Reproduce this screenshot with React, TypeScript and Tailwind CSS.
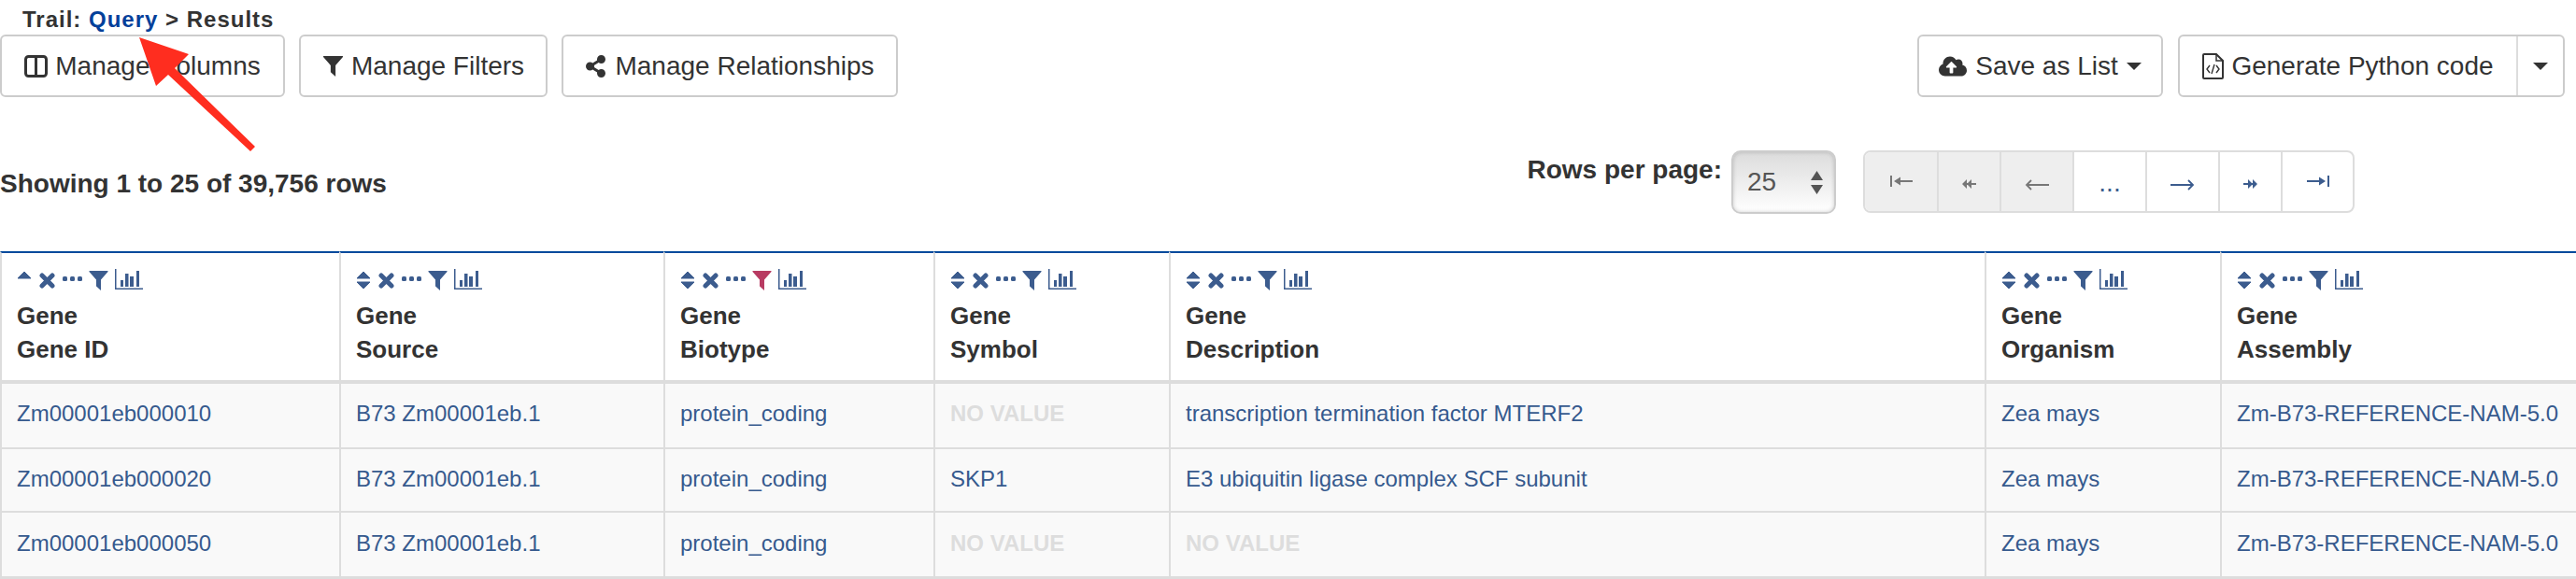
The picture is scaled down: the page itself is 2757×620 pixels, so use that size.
import React from 'react';
import { FaCloudUploadAlt, FaShareAlt } from 'react-icons/fa';

const columns = [
  { group: 'Gene', name: 'Gene ID', width: 'w-[363px]', sort: 'up' },
  { group: 'Gene', name: 'Source', width: 'w-[347px]' },
  { group: 'Gene', name: 'Biotype', width: 'w-[289px]', filtered: true },
  { group: 'Gene', name: 'Symbol', width: 'w-[252px]' },
  { group: 'Gene', name: 'Description', width: 'w-[873px]' },
  { group: 'Gene', name: 'Organism', width: 'w-[252px]' },
  { group: 'Gene', name: 'Assembly', width: 'w-[381px]' },
];

const rows = [
  {
    height: 'h-[70px]',
    cellClass: 'border-b-2 pb-[4px]',
    cells: ['Zm00001eb000010', 'B73 Zm00001eb.1', 'protein_coding', null, 'transcription termination factor MTERF2', 'Zea mays', 'Zm-B73-REFERENCE-NAM-5.0'],
  },
  {
    height: 'h-[68px]',
    cellClass: 'border-b-2 pb-[2px]',
    cells: ['Zm00001eb000020', 'B73 Zm00001eb.1', 'protein_coding', 'SKP1', 'E3 ubiquitin ligase complex SCF subunit', 'Zea mays', 'Zm-B73-REFERENCE-NAM-5.0'],
  },
  {
    height: 'h-[71px]',
    cellClass: 'border-b-[3px] pb-[2px]',
    cells: ['Zm00001eb000050', 'B73 Zm00001eb.1', 'protein_coding', null, null, 'Zea mays', 'Zm-B73-REFERENCE-NAM-5.0'],
  },
];

const FunnelIcon: React.FC<{ className?: string }> = ({ className }) => (
  <svg viewBox="0 0 21 21" className={className} fill="currentColor">
    <path d="M1 0H20Q21 0 20.5 1L13 9.5V21L8 16.5V9.5L.5 1Q0 0 1 0Z" />
  </svg>
);

const SortIcon: React.FC<{ direction?: string }> = ({ direction }) => (
  <svg viewBox="0 0 16 20" className="mt-[2px] h-[20px] w-[16px]" fill="currentColor" stroke="currentColor" strokeWidth="1" strokeLinejoin="round">
    <path d="M1 8L8 1L15 8Z" />
    {direction !== 'up' && <path d="M1 12L15 12L8 19Z" />}
  </svg>
);

const ColumnTools: React.FC<{ sort?: string; filtered?: boolean }> = ({ sort, filtered }) => (
  <div className="flex h-[23px] items-start text-[#3c5c8e]">
    <SortIcon direction={sort} />
    <svg viewBox="0 0 17 17" className="mt-[4px] ml-[8px] h-[17px] w-[17px]" stroke="currentColor" strokeWidth="5" strokeLinecap="round">
      <path d="M3 3L14 14M14 3L3 14" />
    </svg>
    <svg viewBox="0 0 21 5" className="mt-[8px] ml-[8px] h-[5px] w-[21px]" fill="currentColor">
      <rect x="0" width="5" height="5" rx="1.5" />
      <rect x="8" width="5" height="5" rx="1.5" />
      <rect x="16" width="5" height="5" rx="1.5" />
    </svg>
    <FunnelIcon className={filtered ? 'mt-[2px] ml-[7px] h-[21px] w-[21px] text-[#b83b62]' : 'mt-[2px] ml-[7px] h-[21px] w-[21px]'} />
    <svg viewBox="0 0 30 23" className="ml-[7px] h-[23px] w-[30px]" fill="currentColor">
      <rect x="0" y="0" width="1.5" height="22" />
      <rect x="0" y="20.5" width="30" height="1.5" />
      <rect x="6" y="12" width="3" height="7" />
      <rect x="11" y="5" width="3.5" height="14" />
      <rect x="16" y="8" width="4" height="11" />
      <rect x="23" y="2" width="3" height="17" />
    </svg>
  </div>
);

const Caret: React.FC<{ className?: string }> = ({ className }) => (
  <span className={`inline-block border-x-[8px] border-t-[8px] border-x-transparent border-t-[#333] ${className ?? ''}`} />
);

const buttonClass = 'flex h-[67px] items-center rounded-[6px] border-2 border-[#ccc] bg-white text-[28px] text-[#333]';

const PageCell: React.FC<{ width: string; disabled?: boolean; first?: boolean; children: React.ReactNode }> = ({ width, disabled, first, children }) => (
  <div className={`flex h-full items-center justify-center ${width} ${first ? '' : 'border-l-2 border-[#ddd]'} ${disabled ? 'bg-[#eee] text-[#777]' : 'text-[#3c5c8e]'}`}>
    {children}
  </div>
);

export default function App() {
  return (
    <div className="relative h-[620px] w-[2757px] overflow-hidden bg-white font-['Liberation_Sans',sans-serif] text-[#333]">
      <div className="flex h-[37px] items-center pt-[5px] pl-[24px] text-[24px] font-bold tracking-[1px]">
        <span>Trail:&nbsp;</span>
        <a className="text-[#03409a]">Query</a>
        <span>&nbsp;&gt; Results</span>
      </div>

      <div className="flex items-start justify-between pr-[12px]">
        <div className="flex gap-[15px]">
          <button className={`${buttonClass} w-[305px] justify-center gap-[8px]`}>
            <svg viewBox="0 0 25 24" className="h-[24px] w-[25px]" fill="none" stroke="currentColor" strokeWidth="3">
              <rect x="1.5" y="1.5" width="22" height="21" rx="3" />
              <path d="M12.5 1.5V22.5" />
            </svg>
            Manage Columns
          </button>
          <button className={`${buttonClass} w-[266px] justify-center gap-[8px]`}>
            <FunnelIcon className="h-[22px] w-[23px]" />
            Manage Filters
          </button>
          <button className={`${buttonClass} w-[360px] justify-center gap-[9px]`}>
            <FaShareAlt className="h-[24px] w-[23px]" />
            Manage Relationships
          </button>
        </div>
        <div className="flex gap-[16px]">
          <button className={`${buttonClass} w-[263px] justify-center gap-[9px]`}>
            <FaCloudUploadAlt className="h-[30px] w-[30px]" />
            Save as List
            <Caret />
          </button>
          <div className={`${buttonClass} w-[414px]`}>
            <button className="flex h-full w-[362px] items-center justify-center gap-[8px] border-r-2 border-[#ddd]">
              <svg viewBox="0 0 23 28" className="h-[28px] w-[23px]" fill="none" stroke="currentColor" strokeWidth="2">
                <path d="M1 2Q1 1 2 1H15L22 8V26Q22 27 21 27H2Q1 27 1 26Z" />
                <path d="M15 1V8H22" strokeWidth="1.5" />
                <path d="M8 13L5 17L8 21M15 13L18 17L15 21M13 12L10 22" strokeWidth="1.4" />
              </svg>
              Generate Python code
            </button>
            <button className="flex h-full flex-1 items-center justify-center">
              <Caret />
            </button>
          </div>
        </div>
      </div>

      <div className="mt-[57px] flex h-[68px] items-start pr-[237px]">
        <div className="mt-[20px] text-[28px] leading-[32px] font-bold">Showing 1 to 25 of 39,756 rows</div>
        <div className="ml-auto flex items-start">
          <label className="mt-[5px] text-[28px] leading-[32px] font-bold">Rows per page:</label>
          <div className="ml-[10px] flex h-[68px] w-[112px] items-center justify-between rounded-[10px] border-2 border-[#ccc] bg-gradient-to-b from-[#dcdcdc] to-white pr-[12px] pl-[15px] text-[28px] text-[#555] shadow-[inset_0_0_4px_rgba(0,0,0,0.18)]">
            25
            <svg viewBox="0 0 13 25" className="h-[25px] w-[13px]" fill="currentColor">
              <path d="M6.500 0L13 10H0ZM0 15H13L6.500 25Z" />
            </svg>
          </div>
          <div className="ml-[29px] flex h-[67px] overflow-hidden rounded-[8px] border-2 border-[#ddd]">
            <PageCell width="w-[77px]" disabled first>
              <svg viewBox="0 0 24 12" className="mb-[2px] h-[12px] w-[24px]" fill="currentColor">
                <rect x="0" width="2" height="12" />
                <path d="M4 6L11 1.500V5H24V7H11V10.500Z" />
              </svg>
            </PageCell>
            <PageCell width="w-[67px]" disabled>
              <svg viewBox="0 0 15 10" className="mt-[5px] h-[10px] w-[15px]" fill="currentColor">
                <path d="M0 5L5 0V4H15V6H5V10ZM5 5L10 0V10Z" />
              </svg>
            </PageCell>
            <PageCell width="w-[78px]" disabled>
              <svg viewBox="0 0 26 12" className="mt-[7px] h-[12px] w-[26px]" fill="none" stroke="currentColor" strokeWidth="1.800">
                <path d="M26 6H2M7 1L2 6L7 11" />
              </svg>
            </PageCell>
            <PageCell width="w-[78px]">
              <span className="mt-[2px] text-[28px] leading-[32px]">...</span>
            </PageCell>
            <PageCell width="w-[78px]">
              <svg viewBox="0 0 26 12" className="mt-[7px] h-[12px] w-[26px]" fill="none" stroke="currentColor" strokeWidth="1.800">
                <path d="M0 6H24M19 1L24 6L19 11" />
              </svg>
            </PageCell>
            <PageCell width="w-[67px]">
              <svg viewBox="0 0 15 10" className="mt-[5px] h-[10px] w-[15px]" fill="currentColor">
                <path d="M15 5L10 0V4H0V6H10V10ZM10 5L5 0V10Z" />
              </svg>
            </PageCell>
            <PageCell width="w-[77px]">
              <svg viewBox="0 0 24 12" className="mb-[2px] h-[12px] w-[24px]" fill="currentColor">
                <rect x="22" width="2" height="12" />
                <path d="M20 6L13 1.500V5H0V7H13V10.500Z" />
              </svg>
            </PageCell>
          </div>
        </div>
      </div>

      <table className="mt-[40px] w-[2757px] table-fixed border-separate border-spacing-0">
        <colgroup>
          {columns.map(col => (
            <col key={col.name} className={col.width} />
          ))}
        </colgroup>
        <thead>
          <tr>
            {columns.map(col => (
              <th key={col.name} className="h-[142px] border-t-2 border-b-4 border-l-2 border-t-[#024a9c] border-b-[#ddd] border-l-[#ddd] px-[16px] pt-[17px] pb-[15px] text-left align-top">
                <ColumnTools sort={col.sort} filtered={col.filtered} />
                <div className="mt-[9px] text-[26px] leading-[36px] font-bold">{col.group}</div>
                <div className="text-[26px] leading-[36px] font-bold">{col.name}</div>
              </th>
            ))}
          </tr>
        </thead>
        <tbody>
          {rows.map((row, i) => (
            <tr key={i} className={row.height}>
              {row.cells.map((cell, j) => (
                <td key={j} className={`border-l-2 border-[#ddd] bg-[#f9f9f9] px-[16px] align-middle text-[24px] leading-[34px] ${row.cellClass}`}>
                  {cell ? <a className="text-[#365a8e]">{cell}</a> : <span className="font-bold text-[#ddd]">NO VALUE</span>}
                </td>
              ))}
            </tr>
          ))}
        </tbody>
      </table>

      <svg viewBox="140 35 140 130" className="pointer-events-none absolute top-[35px] left-[140px] h-[130px] w-[140px]">
        <path d="M149 40L202 58L187 73L273 157L268 162L180 80L167 92Z" fill="#ff2d1f" />
      </svg>
    </div>
  );
}
